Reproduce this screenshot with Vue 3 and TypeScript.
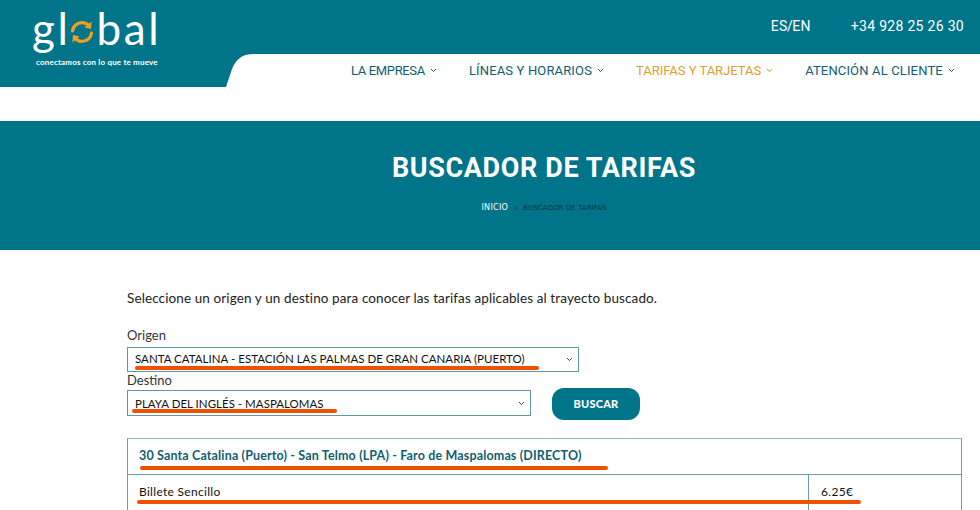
<script setup lang="ts">
const navItems = [
  { label: 'LA EMPRESA', active: false },
  { label: 'LÍNEAS Y HORARIOS', active: false },
  { label: 'TARIFAS Y TARJETAS', active: true },
  { label: 'ATENCIÓN AL CLIENTE', active: false },
]
</script>

<template>
  <div class="page">
    <header class="header">
      <div class="brand">
        <svg class="brand-bg" width="256" height="87" viewBox="0 0 256 87" aria-hidden="true">
          <path d="M0 0H256V54H254C241 54 236 60 232 69C230 75 228 81 226 87H0Z" fill="#00758a" />
        </svg>
        <div class="logo">
          <span class="logo-word">gl<svg class="logo-o" width="24" height="24" viewBox="0 0 24 24" aria-hidden="true">
              <path d="M2.5 11C3 6 7 2.6 12 2.6C14.6 2.6 16.8 3.6 18.4 5.2" fill="none" stroke="#f0a01e" stroke-width="3.2" stroke-linecap="round" />
              <path d="M21.6 1.6L21 9L14.4 7.4Z" fill="#f0a01e" />
              <path d="M21.5 13C21 18 17 21.4 12 21.4C9.4 21.4 7.2 20.4 5.6 18.8" fill="none" stroke="#f0a01e" stroke-width="3.2" stroke-linecap="round" />
              <path d="M2.4 22.4L3 15L9.6 16.6Z" fill="#f0a01e" />
            </svg>bal</span>
          <span class="logo-tag">conectamos con lo que te mueve</span>
        </div>
      </div>
      <div class="head-main">
        <div class="topbar">
          <span class="lang">ES / EN</span>
          <span class="phone">+34 928 25 26 30</span>
        </div>
        <nav class="nav">
          <a v-for="item in navItems" :key="item.label" class="nav-item" :class="{ active: item.active }">
            {{ item.label }}
            <svg width="7" height="5" viewBox="0 0 7 5" aria-hidden="true">
              <path d="M1 1L3.5 3.6L6 1" fill="none" stroke="currentColor" stroke-width="1" />
            </svg>
          </a>
        </nav>
      </div>
    </header>

    <section class="hero">
      <h1>BUSCADOR DE TARIFAS</h1>
      <p class="crumbs"><span class="home">INICIO</span><span class="sep">›</span><span class="here">BUSCADOR DE TARIFAS</span></p>
    </section>

    <main class="content">
      <p class="intro">Seleccione un origen y un destino para conocer las tarifas aplicables al trayecto buscado.</p>

      <label class="field-label origin-label">Origen</label>
      <div class="select select-origin">
        <span class="origin-value">SANTA CATALINA - ESTACIÓN LAS PALMAS DE GRAN CANARIA (PUERTO)</span>
        <svg width="7" height="5" viewBox="0 0 7 5" aria-hidden="true"><path d="M1 1L3.5 3.6L6 1" fill="none" stroke="#444" stroke-width="1" /></svg>
        <i class="mark m-origin"></i>
      </div>

      <label class="field-label dest-label">Destino</label>
      <div class="dest-row">
        <div class="select select-dest">
          <span>PLAYA DEL INGLÉS - MASPALOMAS</span>
          <svg width="7" height="5" viewBox="0 0 7 5" aria-hidden="true"><path d="M1 1L3.5 3.6L6 1" fill="none" stroke="#444" stroke-width="1" /></svg>
          <i class="mark m-dest"></i>
        </div>
        <button class="search" type="button">BUSCAR</button>
      </div>

      <div class="table">
        <div class="route">30 Santa Catalina (Puerto) - San Telmo (LPA) - Faro de Maspalomas (DIRECTO)<i class="mark m-route"></i></div>
        <div class="fare">
          <div class="fare-name">Billete Sencillo</div>
          <div class="fare-price">6.25€</div>
          <i class="mark m-fare"></i>
        </div>
      </div>
    </main>
  </div>
</template>

<style>
html, body { margin: 0; background: #fff; overflow: hidden; }
</style>

<style scoped>
.page { width: 980px; height: 510px; overflow: hidden; background: #fff; font-family: Lato, "Open Sans", sans-serif; }
.header { display: flex; height: 87px; }
.brand { position: relative; width: 256px; flex: none; }
.brand-bg { position: absolute; inset: 0; }
.logo { position: relative; display: flex; flex-direction: column; padding: 0 0 0 32px; color: #fff; }
.logo-word { display: flex; align-items: center; height: 52px; margin-top: 2px; font-size: 44px; font-weight: 400; line-height: 52px; letter-spacing: 2.6px; }
.logo-o { margin: 7px 2px 0 0; }
.logo-tag { margin: 3px 0 0 4px; font-size: 8px; font-weight: 700; line-height: 10px; letter-spacing: 0.18px; white-space: nowrap; }
.head-main { flex: 1; display: flex; flex-direction: column; }
.topbar { height: 54px; background: #00758a; color: #fff; display: flex; justify-content: flex-end; align-items: center; gap: 40px; padding: 0 16px 3px 0; box-sizing: border-box; font-family: Roboto, sans-serif; font-size: 14px; letter-spacing: 0.3px; }
.lang { word-spacing: -4.5px; }
.nav { height: 33px; display: flex; align-items: center; padding: 0 0 0 95px; gap: 32px; font-family: Roboto, sans-serif; font-size: 13px; font-weight: 400; letter-spacing: 0.15px; color: #0f6071; white-space: nowrap; }
.nav-item { display: flex; align-items: center; gap: 5px; padding-bottom: 1px; }
.nav-item:nth-child(1) { letter-spacing: -0.35px; }
.nav-item:nth-child(3) { letter-spacing: -0.02px; }
.nav-item.active { color: #dfa02a; }
.hero { margin-top: 34px; height: 129px; background: #00758a; color: #fff; display: flex; flex-direction: column; align-items: center; box-sizing: border-box; padding: 31px 0 0 108px; }
.hero h1 { margin: 0; font-family: Roboto, sans-serif; font-size: 27px; line-height: 32px; font-weight: 700; letter-spacing: 0.62px; white-space: nowrap; }
.crumbs { margin: 19px 0 0; display: flex; gap: 6px; font-family: "DejaVu Sans", sans-serif; font-size: 7px; line-height: 10px; color: #0c3242; white-space: nowrap; }
.home { color: #fff; font-size: 8px; letter-spacing: 0.3px; }
.sep { font-weight: 700; }
.here { letter-spacing: 0.07px; }
.content { padding: 40px 18px 0 127px; color: #222; }
.intro { margin: 0; font-size: 13.5px; line-height: 16px; letter-spacing: 0.11px; }
.field-label { display: block; font-size: 13px; line-height: 15px; letter-spacing: 0; color: #333; }
.origin-label { margin-top: 22px; margin-bottom: 4px; }
.dest-label { margin-top: 1px; margin-bottom: 2px; }
.select { position: relative; box-sizing: border-box; display: flex; align-items: center; justify-content: space-between; padding: 0 5px 0 7px; border: 1px solid #5f9aa3; background: #fff; color: #111; font-size: 11.5px; letter-spacing: 0.02px; white-space: nowrap; }
.origin-value { padding-bottom: 2px; }
.select-origin { width: 452px; height: 25px; }
.select-dest { width: 404px; height: 26px; }
.dest-row { display: flex; align-items: flex-start; gap: 21px; height: 26px; }
.search { width: 88px; height: 32px; margin-top: -2px; padding: 0 0 2px; flex: none; border: 0; border-radius: 12px; background: #00758a; color: #fff; font-family: Lato, sans-serif; font-size: 11px; font-weight: 900; letter-spacing: 0.2px; }
.table { margin-top: 22px; width: 835px; box-sizing: border-box; border: 1px solid #6f9fa6; border-top-color: #94b8bc; border-bottom: 0; }
.route { position: relative; height: 35px; line-height: 33px; padding-left: 11px; border-bottom: 1px solid #6f9fa6; color: #0f6071; font-size: 12.5px; font-weight: 700; letter-spacing: 0.15px; white-space: nowrap; }
.fare { position: relative; display: flex; height: 60px; font-size: 12px; color: #111; letter-spacing: 0.3px; }
.fare-name { width: 681px; padding: 9px 0 0 11px; box-sizing: border-box; border-right: 1px solid #6f9fa6; }
.fare-price { padding: 9px 0 0 12px; }
.mark { position: absolute; height: 4px; border-radius: 2px; background: #f15000; }
.m-origin { left: 7px; top: 18px; width: 404px; }
.m-dest { left: 4px; top: 18px; width: 205px; }
.m-route { left: 12px; top: 27px; width: 468px; }
.m-fare { left: 9px; top: 25px; width: 724px; }
</style>
